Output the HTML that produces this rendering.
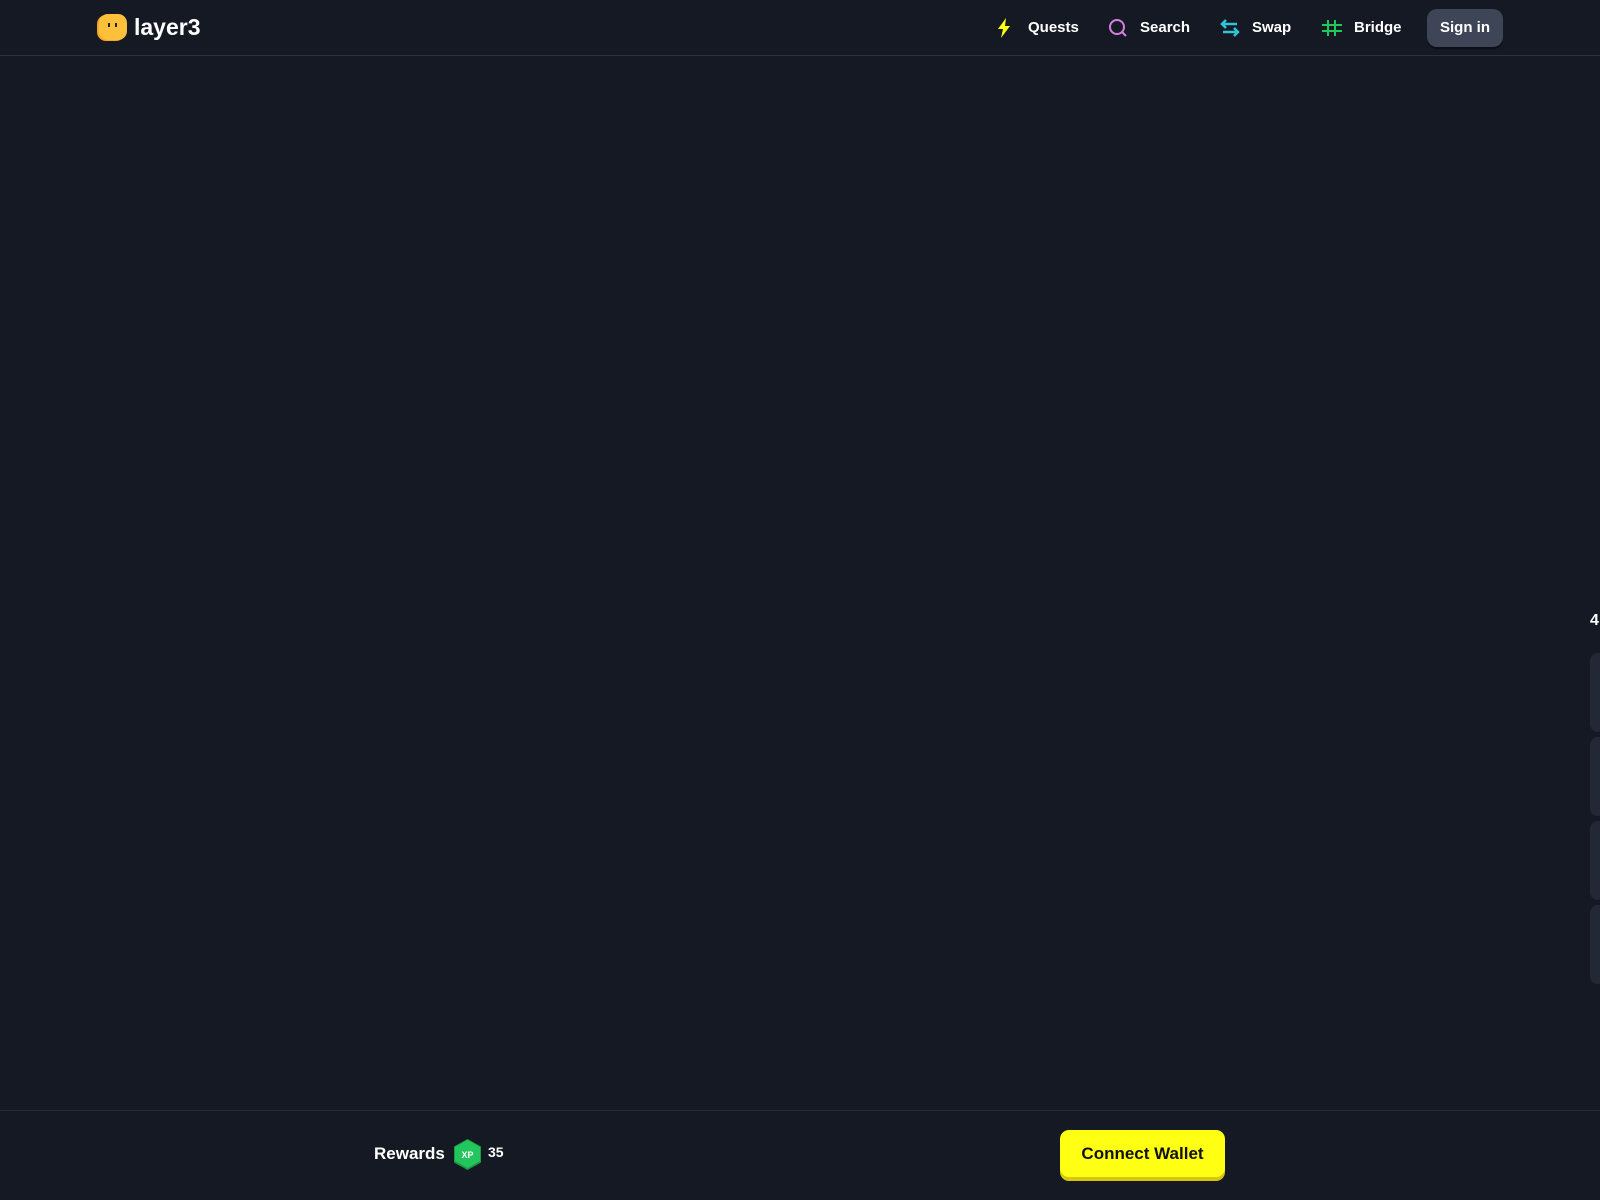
<!DOCTYPE html><html><head><style>
body{margin:0;width:1600px;height:1200px;background:#141923;font-family:"Liberation Sans",sans-serif;color:#fff;overflow:hidden;position:relative}
.hdr{position:absolute;left:0;top:0;width:1600px;height:55px;border-bottom:1px solid #2c313c}
.a{position:absolute}
.nav{font-weight:bold;font-size:15px;top:19px}
.card{position:absolute;left:1590px;width:30px;height:79px;background:#222836;border-radius:8px}
</style></head><body>
<div class="hdr"></div>
<svg class="a" style="left:96px;top:13px" width="32" height="30" viewBox="0 0 32 30"><rect x="1" y="2" width="28" height="26" rx="9" fill="#f5a623"/><rect x="3" y="1" width="28" height="26" rx="9" fill="#fdc03a"/><rect x="12" y="10" width="2" height="4" fill="#222"/><rect x="19" y="10" width="2" height="4" fill="#222"/></svg>
<div class="a" style="left:134px;top:14px;font-size:23px;font-weight:bold">layer3</div>
<svg class="a" style="left:997px;top:18px" width="14" height="20" viewBox="0 0 14 20"><path d="M9 0L1 11h5l-2 9 9-12H8z" fill="#ffff14"/></svg>
<div class="a nav" style="left:1028px">Quests</div>
<svg class="a" style="left:1108px;top:18px" width="20" height="20" viewBox="0 0 20 20" fill="none" stroke="#d77fe0" stroke-width="2"><circle cx="9" cy="9" r="7"/><path d="M14 14l4 4"/></svg>
<div class="a nav" style="left:1140px">Search</div>
<svg class="a" style="left:1219px;top:19px" width="22" height="18" viewBox="0 0 22 18" fill="none" stroke="#2fc4d6" stroke-width="2.5"><path d="M3 5h15M7 1L3 5l4 4M19 13H4M15 9l4 4-4 4"/></svg>
<div class="a nav" style="left:1252px">Swap</div>
<svg class="a" style="left:1322px;top:20px" width="20" height="16" viewBox="0 0 20 16" fill="none" stroke="#1fc95b" stroke-width="2"><path d="M6 0v16M13 0v16M0 5h20M0 11h20"/></svg>
<div class="a nav" style="left:1354px">Bridge</div>
<div class="a" style="left:1427px;top:9px;width:76px;height:38px;background:#3e4556;border-radius:10px;box-shadow:0 2px 0 #0c0f15;font-weight:bold;font-size:15px;line-height:38px;text-align:center">Sign in</div>
<div class="a" style="left:1590px;top:612px;font-weight:bold;font-size:16px">4</div>
<div class="card" style="top:653px"></div><div class="card" style="top:737px"></div><div class="card" style="top:821px"></div><div class="card" style="top:905px"></div>
<div class="a" style="left:0;top:1110px;width:1600px;border-top:1px solid #262b36"></div>
<div class="a" style="left:374px;top:1144px;font-size:17px;font-weight:bold">Rewards</div>
<svg class="a" style="left:454px;top:1139px" width="27" height="31" viewBox="0 0 27 31"><path d="M13.5 0L27 7.5v16L13.5 31 0 23.5v-16z" fill="#1a9c3f"/><path d="M13.5 1L26 8v14L13.5 29 1 22V8z" fill="#22c55e"/><text x="13.5" y="19" font-size="9" font-weight="bold" fill="#fff" text-anchor="middle" font-family="Liberation Sans">XP</text></svg>
<div class="a" style="left:488px;top:1144px;font-size:14px;font-weight:bold">35</div>
<div class="a" style="left:1060px;top:1130px;width:165px;height:47px;background:#ffff14;border-radius:9px;box-shadow:0 4px 0 #d9c60c;color:#111;font-size:17px;line-height:47px;text-align:center;font-weight:bold">Connect Wallet</div>
</body></html>
